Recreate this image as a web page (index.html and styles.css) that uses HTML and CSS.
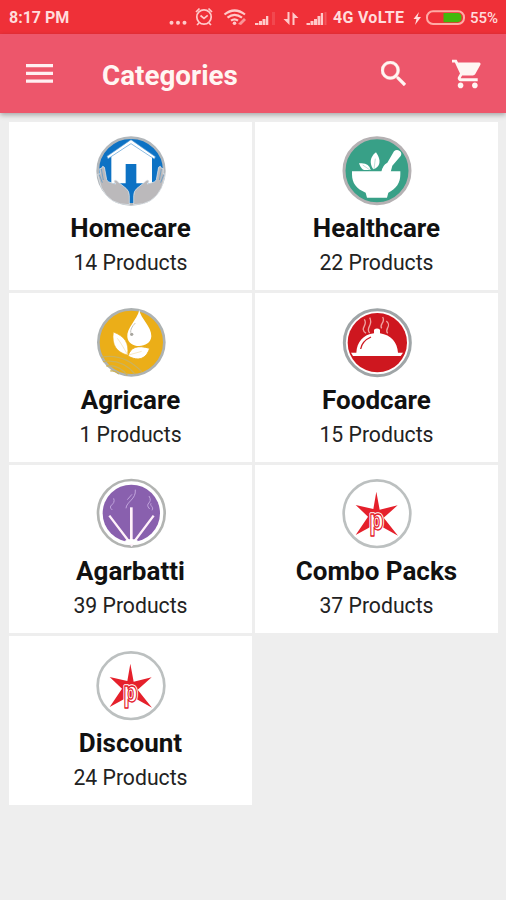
FILE: index.html
```html
<!DOCTYPE html>
<html lang="en">
<head>
<meta charset="utf-8">
<title>Categories</title>
<link rel="stylesheet" href="styles.css">
</head>
<body>
<div class="status">
  <span class="time">8:17 PM</span>
  <svg class="signals" viewBox="165 0 165 34" fill="#ffc9c9">
    <circle cx="171.5" cy="22.7" r="2"/><circle cx="178" cy="22.7" r="2"/><circle cx="184.500" cy="22.7" r="2"/>
    <g fill="none" stroke="#ffc9c9" stroke-width="1.700"><circle cx="204" cy="17" r="7.2"/><path d="M200.500 15.500l3.500 2.800 3.700-3M196 12l3.500-3.500M212 12l-3.500-3.500M199 23l-2 2M209 23l2 2"/></g>
    <g fill="none" stroke="#ffc9c9" stroke-width="2.200"><path d="M224.500 14.500Q234.500 6.500 245 14.500M227.500 17.700Q234.500 12 242 17.700M231 20.700Q234.500 18 238 20.700"/></g>
    <circle cx="234.500" cy="23.300" r="1.800"/><path d="M238 24l6-6 2 2-5 5z" opacity=".65"/>
    <path d="M255 25v-2h3.500v2zM259 25v-4h3v4zM262.500 25v-6h3v6zM266 25v-9h2.300v9z"/><path d="M272 12h3v13h-3z" opacity=".16"/>
    <path d="M287.500 12h2v13l-6-6h4zM292.500 25V12l6 6h-4v7z"/>
    <path d="M306.500 25v-2h3.500v2zM310.500 25v-4h3v4zM314 25v-6h3v6zM317.500 25v-9h2.800v9zM320.800 25V13h2.300v12z"/><path d="M324.500 12h2v13h-2z" opacity=".25"/>
  </svg>
  <span class="network">4G VoLTE</span>
  <svg class="battery" viewBox="411 0 56 34">
    <path d="M419 12l-5.500 7h3l-1.500 6 6-8h-3.500z" fill="#ffdcdc"/>
    <rect x="427" y="11.200" width="37" height="12.800" rx="6" fill="none" stroke="#ffaaa5" stroke-width="2"/>
    <path d="M443.500 13h14q4 0 4 4.600t-4 4.600h-14z" fill="#42b90c"/>
  </svg>
  <span class="percent">55%</span>
</div>
<header class="appbar">
  <svg class="menu" viewBox="0 0 27 20" fill="#fff0f2"><path d="M0 0h27v3.200H0zM0 7.800h27V11H0zM0 15.600h27v3.200H0z"/></svg>
  <h1>Categories</h1>
  <svg class="search" viewBox="3 3 17.500 17.500" fill="#fff6f3" stroke="#fff6f3" stroke-width=".3"><path d="M15.500 14h-.79l-.28-.27A6.471 6.471 0 0 0 16 9.500 6.500 6.500 0 1 0 9.500 16c1.610 0 3.090-.59 4.230-1.570l.27.28v.79l5 4.990L20.490 19l-4.990-5zm-6 0C7.010 14 5 11.990 5 9.500S7.010 5 9.500 5 14 7.010 14 9.500 11.990 14 9.500 14z"/></svg>
  <svg class="cart" viewBox="1 2 21 20" fill="#fff6f3"><path d="M7 18c-1.100 0-1.990.9-1.990 2S5.900 22 7 22s2-.9 2-2-.9-2-2-2zM1 2v2h2l3.600 7.590-1.350 2.450c-.16.280-.25.610-.25.960 0 1.100.9 2 2 2h12v-2H7.420c-.14 0-.25-.11-.25-.25l.03-.12.9-1.630h7.450c.75 0 1.410-.41 1.750-1.030l3.580-6.490A1 1 0 0 0 20 4H5.210l-.94-2H1zm16 16c-1.100 0-1.990.9-1.990 2s.89 2 1.990 2 2-.9 2-2-.9-2-2-2z"/></svg>
</header>
<main class="grid">
  <section class="card">
    <svg class="icon" viewBox="0 0 246 246">
      <circle cx="123" cy="123" r="100" fill="#0d72c4" stroke="#b2b7bb" stroke-width="8"/>
      <path d="M64 79L123 40l63 41v79H64z" fill="#fff"/>
      <path d="M51 79L123 29l73 51-3 7-70-46-69 45z" fill="#fff" stroke="#5c9fd5" stroke-width="2"/>
      <path d="M107 102h32v65l-8 20v32h-14v-32l-10-20z" fill="#0d72c4"/>
      <path id="hand" d="M38 109q7 0 7 12l5 28q4 8 10 8l17 5q-8-9-2-12 5-1 12 8l21 17q10 8 10 22v27Q60 226 34 173L23 133l7-2-1-15 5-1z" fill="#bbb9bb" stroke="#e4edf3" stroke-width="2"/>
      <use href="#hand" transform="matrix(-1 0 0 1 249 0)"/>
      <path d="M34 117l6 33M28 134l9 24M214 117l-6 33M221 134l-9 24" stroke="#4e94c8" stroke-width="2"/>
    </svg>
    <h2>Homecare</h2><p>14 Products</p>
  </section>
  <section class="card">
    <svg class="icon" viewBox="0 0 246 246">
      <circle cx="123" cy="122" r="99" fill="#38a087" stroke="#b5b1b3" stroke-width="9"/>
      <g fill="#fff"><path d="M48 124h145v9c0 26-12 43-36 55l-4 15H93l-4-15c-28-11-41-29-41-55z"/>
      <path d="M136 126q3-20 18-28l20-34q8-8 17-1 8 6 3 15l-25 29-5 19z"/>
      <path d="M120 67c-19 14-20 35-8 51 21-7 25-27 8-51z"/><path d="M69 100q30-4 35 20H84q-9-3-15-20z"/></g>
      <path d="M118 86l-4 31M80 105l22 15" stroke="#9bcfc2" stroke-width="2"/>
    </svg>
    <h2>Healthcare</h2><p>22 Products</p>
  </section>
  <section class="card">
    <svg class="icon" viewBox="0 0 246 246">
      <circle cx="124" cy="121" r="99" fill="#ebae18" stroke="#adb2b2" stroke-width="8"/>
      <path d="M148 24c4 26 37 50 36 79-2 38-69 39-72 2-3-27 29-51 36-81z" fill="#fff"/>
      <path d="M136 63c-10 10-15 20-14 29" fill="none" stroke="#c5c3bd" stroke-width="3"/><circle cx="125" cy="97" r="5" fill="#a8a69f"/>
      <path d="M70 90c35 14 47 32 43 69-31-7-49-28-43-69z" fill="#fff" stroke="#ebae18" stroke-width="2"/>
      <path d="M114 162c8-27 28-34 65-23-10 31-33 41-65 23z" fill="#fff" stroke="#ebae18" stroke-width="3"/>
      <path d="M82 109q12 15 31 50M116 159l39-11" stroke="#f2dca6" fill="none" stroke-width="2"/>
      <path d="M33 166q67-14 122 43M39 179q58-9 97 38M49 192q38-5 63 28M61 207q13-3 26 9" fill="none" stroke="#ccb25a" stroke-width="4"/>
    </svg>
    <h2>Agricare</h2><p>1 Products</p>
  </section>
  <section class="card">
    <svg class="icon" viewBox="0 0 246 246">
      <circle cx="124" cy="122" r="99" fill="#fff" stroke="#9fa5a7" stroke-width="9"/>
      <circle cx="124" cy="122" r="89" fill="#ce171f"/>
      <path d="M45 152h156l-7 10H51zM61 152c2-32 20-54 53-58V83q9-7 18 0v11c34 5 52 28 54 58z" fill="#fff"/>
      <path d="M74 141q4-24 31-36" fill="none" stroke="#ce171f" stroke-width="4"/>
      <path d="M90 94c-22-16 8-24-5-42M101 93c-15-16 13-23 0-46M137 79c-9-13 13-17 3-34M155 94c-12-14 15-21-4-37" fill="none" stroke="#efa3a1" stroke-width="4"/>
    </svg>
    <h2>Foodcare</h2><p>15 Products</p>
  </section>
  <section class="card">
    <svg class="icon" viewBox="0 0 246 246">
      <circle cx="124" cy="121" r="100" fill="#fff" stroke="#b2b4b2" stroke-width="8"/>
      <circle cx="124" cy="121" r="86" fill="#8960ae"/>
      <path d="M58 128l67 88 66-88" fill="none" stroke="#fff1fa" stroke-width="7"/>
      <path d="M124 103v110" stroke="#fff1fa" stroke-width="8"/>
      <path d="M103 204q21-12 43 0l-12 9h-20z" fill="#fff"/>
      <path d="M67 111c-18-15 12-14 4-35M108 106c1-20 31-27 28-56M112 80l14-16M179 108c-18-20 12-15-2-39M186 112c7-11-8-13-3-21" fill="none" stroke="#c1a5dc" stroke-width="3"/>
    </svg>
    <h2>Agarbatti</h2><p>39 Products</p>
  </section>
  <section class="card">
    <svg class="icon" viewBox="0 0 246 246">
      <g id="star"><circle cx="123" cy="122" r="100" fill="#fff" stroke="#bcc0c0" stroke-width="8"/>
      <path d="M121 56l10 54 54-13-42 37 43 54-51-28-28 0-48 26 37-55-37-35 53 12z" fill="#e5202b"/>
      <g transform="translate(121 170) scale(.8 1)" text-anchor="middle"><text class="logo-halo">p</text><text class="logo-letter">p</text></g></g>
    </svg>
    <h2>Combo Packs</h2><p>37 Products</p>
  </section>
  <section class="card">
    <svg class="icon" viewBox="0 0 246 246"><use href="#star"/></svg>
    <h2>Discount</h2><p>24 Products</p>
  </section>
</main>
</body>
</html>
```
FILE: styles.css
```css
* { box-sizing: border-box; }
body { margin: 0; min-height: 900px; background: #eee; font-family: Roboto, sans-serif; color: #111; }
svg { display: block; flex: none; }
.status { display: flex; align-items: center; height: 34px; padding-left: 9px; background: #ef3038; color: #ffdcdc; font-size: 16px; font-weight: 700; white-space: nowrap; }
.status span { flex: none; line-height: 34px; padding-top: 1px; }
.time { width: 156px; }
.signals { width: 165px; height: 34px; }
.network { width: 81px; padding-left: 3px; letter-spacing: .3px; }
.battery { width: 56px; height: 34px; }
.status .percent { padding-left: 3px; font-size: 15px; font-weight: 500; }
.appbar { display: flex; align-items: center; height: 79px; padding: 0 24px 0 26px; background: #ed566b; box-shadow: 0 2px 5px rgba(0, 0, 0, .3); }
.menu { width: 27px; height: 20px; }
h1 { margin: 4px auto 0 49px; font-size: 27.8px; font-weight: 700; line-height: 36px; color: #fff6f3; }
.search { width: 25px; height: 25px; margin-right: 1px; }
.cart { width: 30px; height: 30px; margin-left: 45px; }
.grid { display: grid; grid-template-columns: 243px 243px; grid-auto-rows: 168.5px; gap: 3px; padding: 8.500px 9px; }
.card { display: flex; flex-direction: column; align-items: center; padding-top: 8.500px; background: #fff; }
.icon { width: 82px; height: 82px; }
h2 { margin: 0; font-size: 26px; font-weight: 700; line-height: 32px; }
p { margin: 3px 0 0; font-size: 21.2px; line-height: 32px; color: #222; }
.logo-letter, .logo-halo { font: bold 88px "Liberation Sans", sans-serif; stroke-linejoin: round; }
.logo-halo { fill: #fff; stroke: #fff; stroke-width: 10px; }
.logo-letter { fill: #fff; stroke: #e5202b; stroke-width: 4px; }
```
